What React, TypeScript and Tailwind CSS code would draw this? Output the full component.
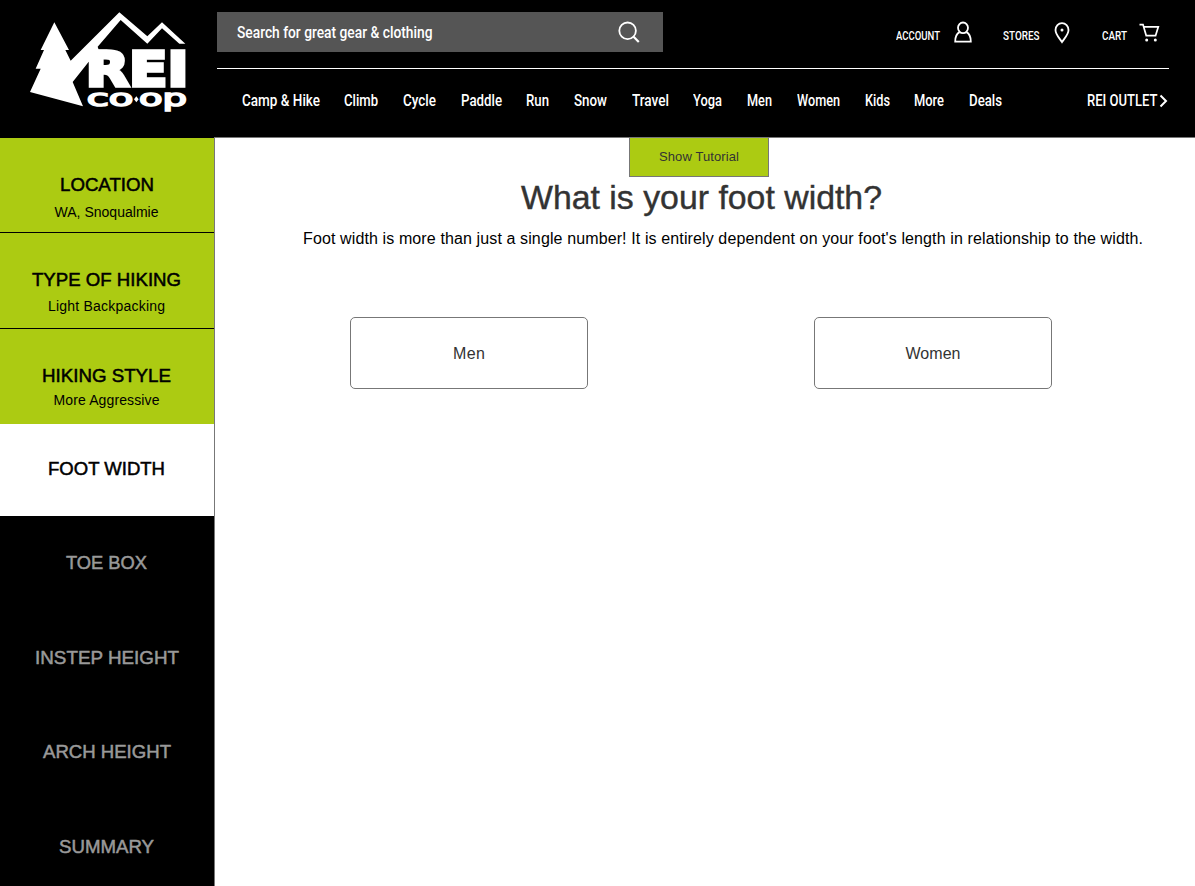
import { useLayoutEffect, useRef, type ReactNode } from "react";

type FitProps = { children: ReactNode; className?: string; mode?: "scale" | "track" };

/** Single line of text that fills the width of its box, by glyph width or by tracking. */
function Fit({ children, className = "", mode = "scale" }: FitProps) {
  const box = useRef<HTMLSpanElement>(null);
  const text = useRef<HTMLSpanElement>(null);
  useLayoutEffect(() => {
    const b = box.current;
    const t = text.current;
    if (!b || !t) return;
    t.style.transform = "none";
    t.style.letterSpacing = "0px";
    const target = b.getBoundingClientRect().width;
    const natural = t.getBoundingClientRect().width;
    if (mode === "scale") {
      t.style.transform = `scaleX(${target / natural})`;
    } else {
      const n = (t.textContent ?? "").length;
      t.style.letterSpacing = `${(target - natural) / (n - 1)}px`;
    }
  }, [mode]);
  return (
    <span ref={box} className={`block shrink-0 ${className}`}>
      <span ref={text} className="inline-block origin-left whitespace-nowrap align-top">
        {children}
      </span>
    </span>
  );
}

function Logo() {
  return (
    <svg width="180" height="137" viewBox="0 0 540 411" fill="#fff" role="img" aria-label="REI Co-op">
      <path d="M103 67L147 150H136L152 182L298 37L382 109L426 67L496 131H478L426 85L382 131L302 60L233 140L236 149H262L205 187L158 246L189 319L30 276L62 206H47L72 150H62Z" />
      <text x="197" y="259" fontFamily="DejaVu Sans" fontWeight="700" fontSize="146" stroke="#fff" strokeWidth="11" textLength="308" lengthAdjust="spacingAndGlyphs">REI</text>
      <text x="200" y="317" fontFamily="DejaVu Sans" fontSize="70" stroke="#fff" strokeWidth="5" textLength="140" lengthAdjust="spacingAndGlyphs">co</text>
      <path d="M349 289L356 298L349 307L342 298Z" />
      <text x="357" y="317" fontFamily="DejaVu Sans" fontSize="70" stroke="#fff" strokeWidth="5" textLength="144" lengthAdjust="spacingAndGlyphs">op</text>
    </svg>
  );
}

const nav = [
  ["Camp & Hike", "w-[78px]"],
  ["Climb", "w-[34px]"],
  ["Cycle", "w-[33px]"],
  ["Paddle", "w-[41px]"],
  ["Run", "w-[23px]"],
  ["Snow", "w-[33px]"],
  ["Travel", "w-[37px]"],
  ["Yoga", "w-[29px]"],
  ["Men", "w-[25px]"],
  ["Women", "w-[43px]"],
  ["Kids", "w-[25px]"],
  ["More", "w-[30px]"],
  ["Deals", "w-[33px]"],
];

function Header() {
  return (
    <header className="flex h-[137px] bg-black pl-5 font-['Roboto',sans-serif] font-medium text-white">
      <Logo />
      <div className="ml-[17px] w-[952px] pt-3">
        <div className="flex h-[57px] border-b border-white">
          <div className="flex h-10 w-[446px] items-center justify-between bg-[#555] pr-[23.5px] pl-5 text-[17px] leading-10">
            <Fit className="w-[195.5px]">Search for great gear &amp; clothing</Fit>
            <svg width="22" height="22" viewBox="0 0 22 22" fill="none" stroke="#fff" strokeWidth="1.8">
              <circle cx="9.6" cy="9.8" r="8.3" />
              <path d="M15.6 15.8L20.8 21" strokeWidth="2.2" />
            </svg>
          </div>
          <div className="ml-auto flex pt-[13px] pr-[9px] text-[13.5px] leading-5">
            <Fit className="w-[44px]">ACCOUNT</Fit>
            <svg className="-mt-1 ml-[14px]" width="18" height="22" viewBox="0 0 18 22" fill="none" stroke="#fff" strokeWidth="1.8">
              <ellipse cx="9" cy="6.8" rx="5" ry="5.3" />
              <path d="M5.6 11.1Q1.2 13.300 1.2 20.700H16.8Q16.8 13.300 12.4 11.100" />
            </svg>
            <Fit className="ml-[31px] w-[36.5px]">STORES</Fit>
            <svg className="-mt-[3.5px] ml-[14.5px]" width="16" height="22" viewBox="0 0 16 22" fill="none" stroke="#fff" strokeWidth="1.8">
              <path d="M8 20C5.500 16.200 1.500 12.500 1.500 8A6.500 6.800 0 0 1 14.500 8C14.500 12.500 10.500 16.200 8 20Z" />
              <circle cx="8" cy="8" r="1.500" fill="#fff" stroke="none" />
            </svg>
            <Fit className="ml-[31.5px] w-[25px]">CART</Fit>
            <svg className="-mt-[2px] ml-[11.5px]" width="22" height="20" viewBox="0 0 22 20" fill="none" stroke="#fff" strokeWidth="1.7">
              <path d="M1.500 1.600H5L8.200 12.600H17.600L20.300 3.800H5.700" />
              <circle cx="8.700" cy="17" r="1.500" fill="#fff" stroke="none" />
              <circle cx="17.300" cy="17" r="1.500" fill="#fff" stroke="none" />
            </svg>
          </div>
        </div>
        <nav className="flex pt-5 pl-[24.5px] text-[17px] leading-[22px]">
          <div className="flex w-[760.5px] justify-between">
            {nav.map(([label, width]) => (
              <Fit key={label} className={width}>{label}</Fit>
            ))}
          </div>
          <Fit className="ml-[84.5px] w-[70.5px]">REI OUTLET</Fit>
          <svg className="mt-[5px] ml-[1.5px]" width="9" height="14" viewBox="0 0 9 14" fill="none" stroke="#fff" strokeWidth="2">
            <path d="M1.500 1.500L7 7L1.500 12.500" />
          </svg>
        </nav>
      </div>
    </header>
  );
}

type Step = { label: string; width: string; row: string; value?: string; valueBox?: string };

const steps: Step[] = [
  { label: "LOCATION", width: "w-[94px]", row: "h-[95px] border-b border-black bg-[#accb12] pt-[37px] text-black", value: "WA, Snoqualmie", valueBox: "mt-[9px] w-[104px]" },
  { label: "TYPE OF HIKING", width: "w-[149px]", row: "h-24 border-b border-black bg-[#accb12] pt-[37px] text-black", value: "Light Backpacking", valueBox: "mt-2 w-[117px]" },
  { label: "HIKING STYLE", width: "w-[129px]", row: "h-[95px] bg-[#accb12] pt-[37px] text-black", value: "More Aggressive", valueBox: "mt-1.5 w-[106px]" },
  { label: "FOOT WIDTH", width: "w-[117px]", row: "h-[92px] bg-white pt-[35px] text-black" },
  { label: "TOE BOX", width: "w-[81px]", row: "h-[95px] bg-black pt-[37px] text-[#999]" },
  { label: "INSTEP HEIGHT", width: "w-[144px]", row: "h-[94px] bg-black pt-[37px] text-[#999]" },
  { label: "ARCH HEIGHT", width: "w-[128px]", row: "h-[95px] bg-black pt-[37px] text-[#999]" },
  { label: "SUMMARY", width: "w-[95px]", row: "h-[86px] bg-black pt-[37px] text-[#999]" },
];

function Sidebar() {
  return (
    <aside className="w-[214px] shrink-0 bg-black">
      {steps.map((s) => (
        <div key={s.label} className={`flex flex-col items-center pr-px ${s.row}`}>
          <Fit className={`text-[18px] leading-5 [-webkit-text-stroke:0.5px] ${s.width}`}>{s.label}</Fit>
          {s.value && (
            <Fit mode="track" className={`text-[14px] leading-4 ${s.valueBox}`}>{s.value}</Fit>
          )}
        </div>
      ))}
    </aside>
  );
}

export default function App() {
  return (
    <div className="h-[886px] w-[1195px] overflow-hidden bg-white font-['Liberation_Sans',Arial,sans-serif]">
      <Header />
      <div className="flex h-[749px]">
        <div className="flex bg-black pt-px">
          <Sidebar />
        </div>
        <main className="flex-1 border-t border-l border-[#777] text-[#333]">
          <button className="ml-[414px] flex h-[39px] w-[140px] justify-center border-x border-b border-[#777] bg-[#accb12] pt-[11px] text-[13px] leading-4">
            <Fit mode="track" className="w-[80px]">Show Tutorial</Fit>
          </button>
          <h1 className="mt-0.5 ml-[306px] text-[33px] leading-[38px] [-webkit-text-stroke:0.4px]">
            <Fit className="w-[361px]">What is your foot width?</Fit>
          </h1>
          <p className="mt-3 ml-[88px] text-[16px] leading-5 text-black">
            <Fit mode="track" className="w-[840px]">
              Foot width is more than just a single number! It is entirely dependent on your foot's length in relationship to the width.
            </Fit>
          </p>
          <div className="mt-[68px] ml-[135px] flex gap-[226px] text-[16px] leading-5">
            <button className="flex h-[72px] w-[238px] items-center justify-center rounded-[5px] border border-[#777] pt-px">
              <Fit mode="track" className="w-[32px]">Men</Fit>
            </button>
            <button className="flex h-[72px] w-[238px] items-center justify-center rounded-[5px] border border-[#777] pt-px">
              <Fit mode="track" className="w-[55px]">Women</Fit>
            </button>
          </div>
        </main>
      </div>
    </div>
  );
}
